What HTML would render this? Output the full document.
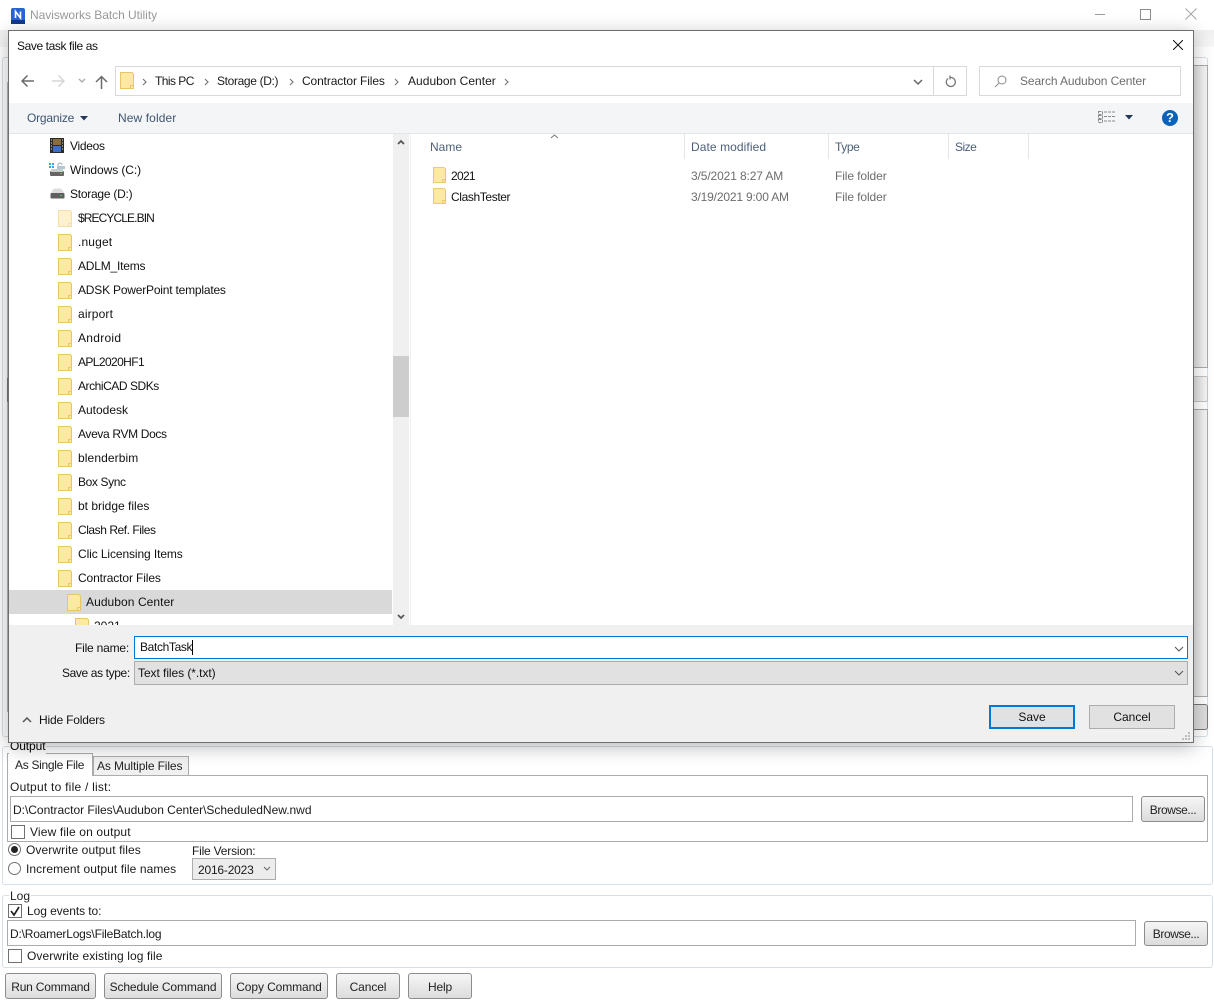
<!DOCTYPE html>
<html><head><meta charset="utf-8"><style>
html,body{margin:0;padding:0;background:#fff}
#p{position:relative;width:1214px;height:1001px;overflow:hidden;background:#fff;font:12px/16px "Liberation Sans",sans-serif;color:#000}
#p div,#p span.t,#p svg{position:absolute}
.t{white-space:nowrap;position:absolute}
.g{color:#1a1a1a}
.btn{box-sizing:border-box;border:1px solid #8c8c8c;border-radius:3px;background:linear-gradient(#f6f6f6,#dcdcdc);text-align:center;line-height:23px;color:#222}
.box{box-sizing:border-box;border:1px solid #ababab;background:#fff}
.grp{box-sizing:border-box;border:1px solid #d5dfe5;border-radius:3px}
.cb{box-sizing:border-box;width:14px;height:14px;border:1px solid #707070;background:#fff}
.rd{box-sizing:border-box;width:13px;height:13px;border:1px solid #707070;border-radius:50%;background:#fff}
.tr{left:78px;color:#111}
.f{left:58px}
</style></head><body><div id="p">
<svg width="0" height="0"><defs><symbol id="fo" viewBox="0 0 14 17"><path d="M.5.5h11.5l1.500 1.500v14.500H.5z" fill="#fde9a3" stroke="#e9c567"/><path d="M10.500 16.500v-3h3v3z" fill="#fde9a3" stroke="#e9c567"/></symbol></defs></svg>

<!-- Main window title -->
<svg style="left:11px;top:8px" width="14" height="16" viewBox="0 0 14 16"><rect width="14" height="16" rx="2" fill="#2a62d8"/><rect y="12" width="14" height="4" fill="#123a8c"/><path d="M4.500 10V3.500l5 6.500V3.500" fill="none" stroke="#fff" stroke-width="1.600"/></svg>
<span class="t" style="left:30px;top:7px;color:#9a9a9a;letter-spacing:-.04px">Navisworks Batch Utility</span>
<div style="left:1095px;top:14px;width:10px;height:1px;background:#9a9a9a"></div>
<div style="left:1140px;top:9px;width:9px;height:9px;border:1px solid #8c8c8c"></div>
<svg style="left:1185px;top:8px" width="12" height="12"><path d="M.5.5l11 11M11.500.5l-11 11" stroke="#a5a5a5" fill="none"/></svg>

<!-- Background strips behind dialog -->
<div style="left:0;top:30px;width:1214px;height:17px;background:linear-gradient(#f0f0f0,#f7f7f7)"></div>
<div style="left:2px;top:57px;width:6px;height:680px;box-sizing:border-box;border:1px solid #d5dfe5;border-right:0;border-radius:3px 0 0 3px"></div>
<div style="left:7px;top:82px;width:1px;height:630px;background:#b9b9b9"></div>
<div style="left:7px;top:378px;width:1px;height:24px;background:#777"></div>
<div style="left:1194px;top:57px;width:14px;height:680px;box-sizing:border-box;border:1px solid #d5dfe5;border-left:0;border-radius:0 3px 3px 0"></div>
<div style="left:1194px;top:65px;width:14px;height:303px;background:linear-gradient(90deg,#e2e2e2,#f7f7f7);border:1px solid #a9a9a9;border-left:0;box-sizing:border-box"></div>
<div style="left:1194px;top:376px;width:14px;height:26px;background:linear-gradient(90deg,#e2e2e2,#f7f7f7);border:1px solid #c4c4c4;border-left:0;border-radius:0 2px 2px 0;box-sizing:border-box"></div>
<div style="left:1194px;top:409px;width:14px;height:288px;background:linear-gradient(90deg,#e2e2e2,#f7f7f7);border:1px solid #a9a9a9;border-left:0;box-sizing:border-box"></div>
<div style="left:1194px;top:704px;width:14px;height:26px;background:#dedede;border:1px solid #777;border-left:0;border-radius:0 3px 3px 0;box-sizing:border-box"></div>

<!-- Output group -->
<div class="grp" style="left:2px;top:746px;width:1211px;height:139px"></div>
<span class="t" style="left:9px;top:739px;background:#fff;padding:0 1px;line-height:15px;z-index:1;letter-spacing:-.1px">Output</span>
<div style="left:7px;top:775px;width:1201px;height:67px;box-sizing:border-box;border:1px solid #acacac"></div>
<div style="left:93px;top:756px;width:96px;height:20px;box-sizing:border-box;border:1px solid #acacac;background:#f0f0f0"></div>
<span class="t" style="left:97px;top:758px;color:#222;letter-spacing:-.12px">As Multiple Files</span>
<div style="left:7px;top:753px;width:86px;height:23px;box-sizing:border-box;border:1px solid #acacac;border-bottom:0;background:#fff"></div>
<span class="t" style="left:15px;top:757px;color:#222;letter-spacing:-.3px">As Single File</span>
<span class="t g" style="left:10px;top:779px;letter-spacing:.24px">Output to file / list:</span>
<div class="box" style="left:10px;top:796px;width:1123px;height:26px"></div>
<span class="t g" style="left:13px;top:802px;letter-spacing:-.02px">D:\Contractor Files\Audubon Center\ScheduledNew.nwd</span>
<div class="btn" style="left:1141px;top:796px;width:64px;height:26px;line-height:27px;letter-spacing:-.4px">Browse...</div>
<div class="cb" style="left:11px;top:825px"></div>
<span class="t g" style="left:30px;top:824px;letter-spacing:.15px">View file on output</span>
<div class="rd" style="left:8px;top:843px"></div><div style="left:11px;top:846px;width:7px;height:7px;background:#222;border-radius:50%"></div>
<span class="t g" style="left:26px;top:842px;letter-spacing:.1px">Overwrite output files</span>
<div class="rd" style="left:8px;top:862px"></div>
<span class="t g" style="left:26px;top:861px;letter-spacing:.08px">Increment output file names</span>
<span class="t g" style="left:192px;top:843px;letter-spacing:-.2px">File Version:</span>
<div style="left:192px;top:858px;width:84px;height:22px;box-sizing:border-box;border:1px solid #acacac;background:#ececec"></div>
<span class="t g" style="left:198px;top:862px;letter-spacing:-.2px">2016-2023</span>
<svg style="left:263px;top:866px" width="8" height="5"><path d="M1 1l3 3 3-3" fill="none" stroke="#666"/></svg>

<!-- Log group -->
<div class="grp" style="left:2px;top:895px;width:1211px;height:73px"></div>
<span class="t" style="left:9px;top:889px;background:#fff;padding:0 1px;line-height:15px;color:#222">Log</span>
<div class="cb" style="left:8px;top:904px"></div>
<svg style="left:9px;top:905px" width="12" height="12"><path d="M2 6l3 4 5-8" fill="none" stroke="#222" stroke-width="1.700"/></svg>
<span class="t g" style="left:27px;top:903px;letter-spacing:-.07px">Log events to:</span>
<div class="box" style="left:7px;top:920px;width:1129px;height:26px"></div>
<span class="t g" style="left:10px;top:926px;letter-spacing:-.2px">D:\RoamerLogs\FileBatch.log</span>
<div class="btn" style="left:1144px;top:921px;width:64px;height:25px;line-height:25px;letter-spacing:-.4px">Browse...</div>
<div class="cb" style="left:8px;top:949px"></div>
<span class="t g" style="left:27px;top:948px;letter-spacing:.08px">Overwrite existing log file</span>

<!-- Bottom buttons -->
<div class="btn" style="left:5px;top:973px;width:91px;height:26px;line-height:27px;letter-spacing:-.2px">Run Command</div>
<div class="btn" style="left:104px;top:973px;width:118px;height:26px;line-height:27px;letter-spacing:-.12px">Schedule Command</div>
<div class="btn" style="left:230px;top:973px;width:98px;height:26px;line-height:27px;letter-spacing:-.1px">Copy Command</div>
<div class="btn" style="left:336px;top:973px;width:64px;height:26px;line-height:27px;letter-spacing:-.1px">Cancel</div>
<div class="btn" style="left:408px;top:973px;width:64px;height:26px;line-height:27px;letter-spacing:-.2px">Help</div>

<!-- Dialog -->
<div id="d" style="left:8px;top:30px;width:1186px;height:713px;box-sizing:border-box;border:1px solid #6e6e6e;background:#fff;box-shadow:0 4px 18px rgba(0,0,0,.28);z-index:5"></div>
<div style="left:0;top:0;width:1214px;height:1001px;z-index:6">
<span class="t" style="left:17px;top:38px;color:#111;letter-spacing:-.4px">Save task file as</span>
<svg style="left:1173px;top:40px" width="10" height="10"><path d="M0 0l10 10M10 0L0 10" stroke="#111" fill="none"/></svg>

<!-- Nav -->
<svg style="left:21px;top:74px" width="14" height="14" viewBox="0 0 14 14"><path d="M1 7h12M6.500 1.500L1 7l5.500 5.500" fill="none" stroke="#6a6a6a" stroke-width="1.500"/></svg>
<svg style="left:51px;top:74px" width="14" height="14" viewBox="0 0 14 14"><path d="M1 7h12M7.500 1.500L13 7l-5.500 5.500" fill="none" stroke="#d6d6d6" stroke-width="1.500"/></svg>
<svg style="left:78px;top:78px" width="8" height="6"><path d="M1 1l3 3 3-3" fill="none" stroke="#a8a8a8" stroke-width="1.300"/></svg>
<svg style="left:95px;top:75px" width="13" height="14" viewBox="0 0 13 14"><path d="M6.500 14V1.500M1 7l5.500-5.500L12 7" fill="none" stroke="#6a6a6a" stroke-width="1.500"/></svg>
<div style="left:115px;top:66px;width:852px;height:30px;box-sizing:border-box;border:1px solid #d9d9d9"></div>
<div style="left:933px;top:66px;width:1px;height:30px;background:#d9d9d9"></div>
<svg style="left:120px;top:72px" width="14" height="17"><use href="#fo"/></svg>
<svg style="left:142px;top:78px" width="5" height="8"><path d="M1 1l3 3-3 3" fill="none" stroke="#777" stroke-width="1.200"/></svg>
<span class="t g" style="left:155px;top:73px;letter-spacing:-.55px">This PC</span>
<svg style="left:204px;top:78px" width="5" height="8"><path d="M1 1l3 3-3 3" fill="none" stroke="#777" stroke-width="1.200"/></svg>
<span class="t g" style="left:217px;top:73px;letter-spacing:-.35px">Storage (D:)</span>
<svg style="left:289px;top:78px" width="5" height="8"><path d="M1 1l3 3-3 3" fill="none" stroke="#777" stroke-width="1.200"/></svg>
<span class="t g" style="left:302px;top:73px;letter-spacing:-.12px">Contractor Files</span>
<svg style="left:394px;top:78px" width="5" height="8"><path d="M1 1l3 3-3 3" fill="none" stroke="#777" stroke-width="1.200"/></svg>
<span class="t g" style="left:408px;top:73px;letter-spacing:.03px">Audubon Center</span>
<svg style="left:504px;top:78px" width="5" height="8"><path d="M1 1l3 3-3 3" fill="none" stroke="#777" stroke-width="1.200"/></svg>
<svg style="left:913px;top:79px" width="10" height="7"><path d="M1 1l4 4 4-4" fill="none" stroke="#666" stroke-width="1.500"/></svg>
<svg style="left:945px;top:75px" width="12" height="13" viewBox="0 0 12 13"><path d="M3 3.500a4.500 4.500 0 1 0 3-1h-1.500M5 .5v4" fill="none" stroke="#777" stroke-width="1.300"/></svg>
<div style="left:979px;top:66px;width:202px;height:30px;box-sizing:border-box;border:1px solid #d9d9d9"></div>
<svg style="left:994px;top:75px" width="13" height="13" viewBox="0 0 13 13"><circle cx="8" cy="5" r="4" fill="none" stroke="#8a8a8a"/><path d="M5 8L1 12" stroke="#8a8a8a" fill="none"/></svg>
<span class="t" style="left:1020px;top:73px;color:#6d6d6d;letter-spacing:-.1px">Search Audubon Center</span>

<!-- Toolbar -->
<div style="left:9px;top:103px;width:1184px;height:30px;background:#f4f5f7;border-bottom:1px solid #e6e6e6"></div>
<span class="t" style="left:27px;top:110px;color:#3f5570;letter-spacing:-.2px">Organize</span>
<svg style="left:80px;top:116px" width="8" height="5"><path d="M0 0h8L4 4.500z" fill="#24395a"/></svg>
<span class="t" style="left:118px;top:110px;color:#3f5570;letter-spacing:.1px">New folder</span>
<svg style="left:1098px;top:110px" width="18" height="14" viewBox="0 0 18 14"><path d="M.5 1.500h4v3h-4zM.5 5.500h4v3h-4zM.5 9.500h4v3h-4zM6 2h11M6 6.500h11M6 11h11" fill="none" stroke="#8a8a8a" stroke-dasharray="3 1"/></svg>
<svg style="left:1125px;top:115px" width="8" height="5"><path d="M0 0h8L4 4.500z" fill="#24395a"/></svg>
<svg style="left:1162px;top:110px" width="16" height="16"><circle cx="8" cy="8" r="8" fill="#0b62b8"/></svg>
<span class="t" style="left:1166px;top:110px;color:#fff;font-weight:bold;font-size:13px">?</span>

<!-- Tree -->
<div style="left:9px;top:590px;width:383px;height:24px;background:#d9d9d9"></div>
<svg style="left:50px;top:138px" width="14" height="15" viewBox="0 0 14 15"><rect width="14" height="15" fill="#2b2b2b"/><rect x="3" y="1" width="8" height="6" fill="#8a6d3b"/><rect x="3" y="8" width="8" height="6" fill="#3d6fc9"/><path d="M1 2h1M1 5h1M1 8h1M1 11h1M12 2h1M12 5h1M12 8h1M12 11h1" stroke="#ddd"/></svg>
<span class="t tr" style="left:70px;top:138px;letter-spacing:-.3px">Videos</span>
<svg style="left:49px;top:162px" width="17" height="15" viewBox="0 0 17 15"><rect x="1" y="9" width="14" height="5" rx="1" fill="#666"/><rect x="2" y="7" width="12" height="3" fill="#ccc"/><rect x="11" y="11" width="2" height="1" fill="#3bd04e"/><path d="M0 1h2v2H0zM3 1h2v2H3zM0 4h2v2H0zM3 4h2v2H3z" fill="#27a7f0"/><path d="M9 6V3a2 2 0 0 1 4 0" fill="none" stroke="#9aa"/><rect x="8" y="4" width="8" height="3" fill="#b4c4d4"/></svg>
<span class="t tr" style="left:70px;top:162px;letter-spacing:-.08px">Windows (C:)</span>
<svg style="left:50px;top:188px" width="15" height="11" viewBox="0 0 15 11"><path d="M2 3q1-2.500 3-2.500h5q2 0 3 2.500l1 2H1z" fill="#ddd"/><rect x=".5" y="5" width="14" height="5.500" rx="1" fill="#5f5f5f"/><rect x="10" y="7" width="2" height="1" fill="#3bd04e"/></svg>
<span class="t tr" style="left:70px;top:186px;letter-spacing:-.25px">Storage (D:)</span>
<svg class="f" style="top:210px;opacity:.55" width="14" height="17"><use href="#fo"/></svg><span class="t tr" style="top:210px;letter-spacing:-.9px">$RECYCLE.BIN</span>
<svg class="f" style="top:234px" width="14" height="17"><use href="#fo"/></svg><span class="t tr" style="top:234px;letter-spacing:.15px">.nuget</span>
<svg class="f" style="top:258px" width="14" height="17"><use href="#fo"/></svg><span class="t tr" style="top:258px;letter-spacing:-.2px">ADLM_Items</span>
<svg class="f" style="top:282px" width="14" height="17"><use href="#fo"/></svg><span class="t tr" style="top:282px;letter-spacing:-.2px">ADSK PowerPoint templates</span>
<svg class="f" style="top:306px" width="14" height="17"><use href="#fo"/></svg><span class="t tr" style="top:306px;letter-spacing:.15px">airport</span>
<svg class="f" style="top:330px" width="14" height="17"><use href="#fo"/></svg><span class="t tr" style="top:330px;letter-spacing:.28px">Android</span>
<svg class="f" style="top:354px" width="14" height="17"><use href="#fo"/></svg><span class="t tr" style="top:354px;letter-spacing:-.6px">APL2020HF1</span>
<svg class="f" style="top:378px" width="14" height="17"><use href="#fo"/></svg><span class="t tr" style="top:378px;letter-spacing:-.45px">ArchiCAD SDKs</span>
<svg class="f" style="top:402px" width="14" height="17"><use href="#fo"/></svg><span class="t tr" style="top:402px">Autodesk</span>
<svg class="f" style="top:426px" width="14" height="17"><use href="#fo"/></svg><span class="t tr" style="top:426px;letter-spacing:-.35px">Aveva RVM Docs</span>
<svg class="f" style="top:450px" width="14" height="17"><use href="#fo"/></svg><span class="t tr" style="top:450px;letter-spacing:.1px">blenderbim</span>
<svg class="f" style="top:474px" width="14" height="17"><use href="#fo"/></svg><span class="t tr" style="top:474px;letter-spacing:-.38px">Box Sync</span>
<svg class="f" style="top:498px" width="14" height="17"><use href="#fo"/></svg><span class="t tr" style="top:498px">bt bridge files</span>
<svg class="f" style="top:522px" width="14" height="17"><use href="#fo"/></svg><span class="t tr" style="top:522px;letter-spacing:-.45px">Clash Ref. Files</span>
<svg class="f" style="top:546px" width="14" height="17"><use href="#fo"/></svg><span class="t tr" style="top:546px;letter-spacing:-.1px">Clic Licensing Items</span>
<svg class="f" style="top:570px" width="14" height="17"><use href="#fo"/></svg><span class="t tr" style="top:570px;letter-spacing:-.12px">Contractor Files</span>
<svg style="left:67px;top:594px" width="14" height="17"><use href="#fo"/></svg><span class="t tr" style="left:86px;top:594px;letter-spacing:.07px">Audubon Center</span>
<svg style="left:75px;top:618px" width="14" height="17"><use href="#fo"/></svg><span class="t tr" style="left:94px;top:618px">2021</span>

<!-- Scrollbar -->
<div style="left:393px;top:134px;width:16px;height:491px;background:#f0f0f0"></div>
<div style="left:393px;top:356px;width:16px;height:61px;background:#cdcdcd"></div>
<svg style="left:397px;top:139px" width="8" height="6"><path d="M1 5l3-3 3 3" fill="none" stroke="#555" stroke-width="1.700"/></svg>
<svg style="left:397px;top:614px" width="8" height="6"><path d="M1 1l3 3 3-3" fill="none" stroke="#555" stroke-width="1.700"/></svg>
<div style="left:410px;top:134px;width:1px;height:491px;background:#f0f0f0"></div>

<!-- List headers -->
<svg style="left:550px;top:134px" width="9" height="5"><path d="M1 4l3.500-3L8 4" fill="none" stroke="#777"/></svg>
<span class="t" style="left:430px;top:139px;color:#4c607a">Name</span>
<div style="left:684px;top:134px;width:1px;height:25px;background:#e5e5e5"></div>
<span class="t" style="left:691px;top:139px;color:#4c607a;letter-spacing:.08px">Date modified</span>
<div style="left:828px;top:134px;width:1px;height:25px;background:#e5e5e5"></div>
<span class="t" style="left:835px;top:139px;color:#4c607a;letter-spacing:-.4px">Type</span>
<div style="left:948px;top:134px;width:1px;height:25px;background:#e5e5e5"></div>
<span class="t" style="left:955px;top:139px;color:#4c607a;letter-spacing:-.5px">Size</span>
<div style="left:1028px;top:134px;width:1px;height:25px;background:#e5e5e5"></div>

<!-- Files -->
<svg style="left:433px;top:167px" width="13" height="16"><use href="#fo"/></svg>
<span class="t" style="left:451px;top:168px;color:#111;letter-spacing:-.7px">2021</span>
<span class="t" style="left:691px;top:168px;color:#6d6d6d;letter-spacing:-.12px">3/5/2021 8:27 AM</span>
<span class="t" style="left:835px;top:168px;color:#6d6d6d;letter-spacing:-.1px">File folder</span>
<svg style="left:433px;top:188px" width="13" height="16"><use href="#fo"/></svg>
<span class="t" style="left:451px;top:189px;color:#111;letter-spacing:-.38px">ClashTester</span>
<span class="t" style="left:691px;top:189px;color:#6d6d6d;letter-spacing:-.17px">3/19/2021 9:00 AM</span>
<span class="t" style="left:835px;top:189px;color:#6d6d6d;letter-spacing:-.1px">File folder</span>

<!-- Bottom panel -->
<div style="left:9px;top:625px;width:1184px;height:117px;background:#f0f0f0"></div>
<span class="t" style="left:75px;top:640px;color:#111;letter-spacing:-.2px">File name:</span>
<div style="left:134px;top:636px;width:1054px;height:23px;box-sizing:border-box;border:1px solid #0078d7;background:#fff"></div>
<span class="t" style="left:140px;top:639px;color:#111;letter-spacing:-.35px">BatchTask</span>
<div style="left:192px;top:640px;width:1px;height:15px;background:#000"></div>
<svg style="left:1174px;top:646px" width="10" height="6"><path d="M1 1l4 4 4-4" fill="none" stroke="#555"/></svg>
<span class="t" style="left:62px;top:665px;color:#111;letter-spacing:-.38px">Save as type:</span>
<div style="left:134px;top:661px;width:1054px;height:24px;box-sizing:border-box;border:1px solid #adadad;background:#e1e1e1"></div>
<span class="t" style="left:138px;top:665px;color:#111;letter-spacing:-.06px">Text files (*.txt)</span>
<svg style="left:1174px;top:670px" width="10" height="6"><path d="M1 1l4 4 4-4" fill="none" stroke="#555"/></svg>
<svg style="left:22px;top:716px" width="10" height="7"><path d="M1 6l4-4 4 4" fill="none" stroke="#555" stroke-width="1.500"/></svg>
<span class="t" style="left:39px;top:712px;color:#111;letter-spacing:-.18px">Hide Folders</span>
<div style="left:989px;top:705px;width:86px;height:24px;box-sizing:border-box;border:2px solid #0078d7;background:#e1e1e1;text-align:center;line-height:20px;color:#111">Save</div>
<div style="left:1089px;top:705px;width:86px;height:24px;box-sizing:border-box;border:1px solid #adadad;background:#e1e1e1;text-align:center;line-height:22px;color:#111">Cancel</div>
<svg style="left:1182px;top:732px" width="9" height="9"><path d="M6 0h2v2H6zM3 3h2v2H3zM6 3h2v2H6zM0 6h2v2H0zM3 6h2v2H3zM6 6h2v2H6z" fill="#bdbdbd"/></svg>
</div>
</div></body></html>
